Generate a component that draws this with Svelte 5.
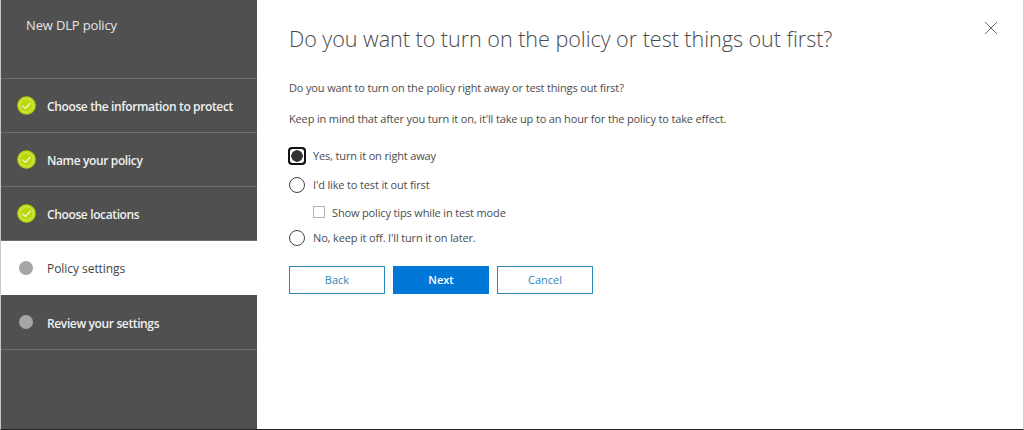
<script>
  const steps = [
    { label: "Choose the information to protect", state: "done" },
    { label: "Name your policy", state: "done" },
    { label: "Choose locations", state: "done" },
    { label: "Policy settings", state: "current" },
    { label: "Review your settings", state: "todo" }
  ];
  const options = [
    { label: "Yes, turn it on right away", checked: true },
    { label: "I'd like to test it out first", checked: false, tip: "Show policy tips while in test mode" },
    { label: "No, keep it off. I'll turn it on later.", checked: false }
  ];
</script>

<div class="frame">
  <aside class="side">
    <div class="side-title">New DLP policy</div>
    <ul class="steps">
      {#each steps as step}
        <li class="step {step.state}">
          {#if step.state === "done"}
            <svg class="check" width="19" height="19" viewBox="0 0 20 20">
              <circle cx="10" cy="10" r="9.8" fill="#bad80a" />
              <circle cx="10" cy="10" r="7.2" fill="none" stroke="#e4ef9a" stroke-width="0.8" />
              <path d="M5.8 10.2 L8.8 13 L14.2 7.4" fill="none" stroke="#f4f8d8" stroke-width="1.3" />
            </svg>
          {:else}
            <span class="dot"></span>
          {/if}
          <span class="step-label">{step.label}</span>
        </li>
      {/each}
    </ul>
  </aside>

  <main class="panel">
    <button class="close" aria-label="Close">
      <svg width="14" height="14" viewBox="0 0 14 14">
        <path d="M1 1 L13 13 M13 1 L1 13" stroke="#666" stroke-width="1" fill="none" />
      </svg>
    </button>
    <h1>Do you want to turn on the policy or test things out first?</h1>
    <p class="first">Do you want to turn on the policy right away or test things out first?</p>
    <p class="second">Keep in mind that after you turn it on, it'll take up to an hour for the policy to take effect.</p>

    <div class="options">
      {#each options as opt}
        <div class="option">
          <span class="radio" class:checked={opt.checked}></span>
          <span class="option-label">{opt.label}</span>
        </div>
        {#if opt.tip}
          <div class="tip">
            <span class="box"></span>
            <span>{opt.tip}</span>
          </div>
        {/if}
      {/each}
    </div>

    <div class="buttons">
      <button class="btn">Back</button>
      <button class="btn primary">Next</button>
      <button class="btn">Cancel</button>
    </div>
  </main>
</div>

<style>
  :global(body) {
    margin: 0;
    background: #fff;
  }

  .frame {
    display: flex;
    width: 1024px;
    height: 430px;
    box-sizing: border-box;
    border-left: 1px solid #c8c8c8;
    border-right: 1px solid #d0d0d0;
    border-bottom: 1px solid #222;
    font-family: "Open Sans", "Noto Sans", sans-serif;
    overflow: hidden;
  }

  .side {
    width: 256px;
    flex: none;
    background: #505050;
    color: #f0f0f0;
  }

  .side-title {
    height: 78px;
    box-sizing: border-box;
    padding: 15px 0 0 25px;
    font-size: 13px;
    line-height: 20px;
    color: #e4e4e4;
    letter-spacing: -0.15px;
  }

  .steps {
    list-style: none;
    margin: 0;
    padding: 0;
    border-top: 1px solid #6e6e6e;
  }

  .step {
    display: flex;
    align-items: center;
    height: 53px;
    border-bottom: 1px solid #6e6e6e;
    font-size: 12px;
    font-weight: 600;
    letter-spacing: -0.37px;
    color: #f0f0f0;
  }

  .step-label {
    padding-top: 2px;
  }

  .step.current {
    background: #fff;
    color: #444;
    font-weight: 400;
    height: 54px;
    letter-spacing: -0.05px;
    border-bottom: none;
  }

  .step.current .step-label {
    padding-top: 0;
  }

  .step.todo {
    height: 54px;
  }

  .check {
    margin-left: 16px;
    margin-right: 11px;
    flex: none;
  }

  .dot {
    width: 14px;
    height: 14px;
    border-radius: 50%;
    background: #a6a6a6;
    margin-left: 18px;
    margin-right: 14px;
    flex: none;
  }

  .panel {
    position: relative;
    flex: 1;
    padding: 0 0 0 32px;
    color: #4c4c4c;
    font-size: 11px;
    letter-spacing: -0.15px;
  }

  .close {
    position: absolute;
    top: 21px;
    right: 25px;
    width: 14px;
    height: 14px;
    padding: 0;
    border: none;
    background: none;
    line-height: 0;
  }

  h1 {
    margin: 23px 0 0;
    font-size: 21.6px;
    line-height: 32px;
    font-weight: 300;
    color: #4a4a4a;
    letter-spacing: -0.05px;
  }

  p {
    margin: 0;
    line-height: 16px;
  }

  .first { margin-top: 25px; }
  .second { margin-top: 15px; }

  .options {
    margin-top: 19px;
    display: flex;
    flex-direction: column;
  }

  .option {
    display: flex;
    align-items: center;
    height: 20px;
    gap: 8px;
    margin-bottom: 9px;
  }

  .option-label {
    padding-bottom: 2px;
  }

  .radio {
    width: 16px;
    height: 16px;
    box-sizing: border-box;
    flex: none;
    border: 1px solid #444;
    border-radius: 50%;
    background: #fff;
  }

  .radio.checked {
    outline: 2px solid #111;
    outline-offset: -1px;
    border-radius: 3px;
    background: radial-gradient(circle, #333 0 5.5px, #fff 6px);
    border-color: #111;
  }

  .tip {
    display: flex;
    align-items: center;
    gap: 7px;
    height: 16px;
    margin: 0 0 8px 24px;
  }

  .box {
    width: 10px;
    height: 10px;
    border: 1px solid #b4b4b4;
  }

  .buttons {
    display: flex;
    gap: 8px;
    margin-top: 9px;
  }

  .btn {
    width: 96px;
    height: 28px;
    box-sizing: border-box;
    border: 1px solid #2b88b8;
    background: #fff;
    color: #2b88b8;
    font: inherit;
    font-size: 11px;
    padding: 0 0 2px;
  }

  .btn.primary {
    background: #0078d7;
    border-color: #0078d7;
    color: #fff;
    font-weight: 600;
  }
</style>
